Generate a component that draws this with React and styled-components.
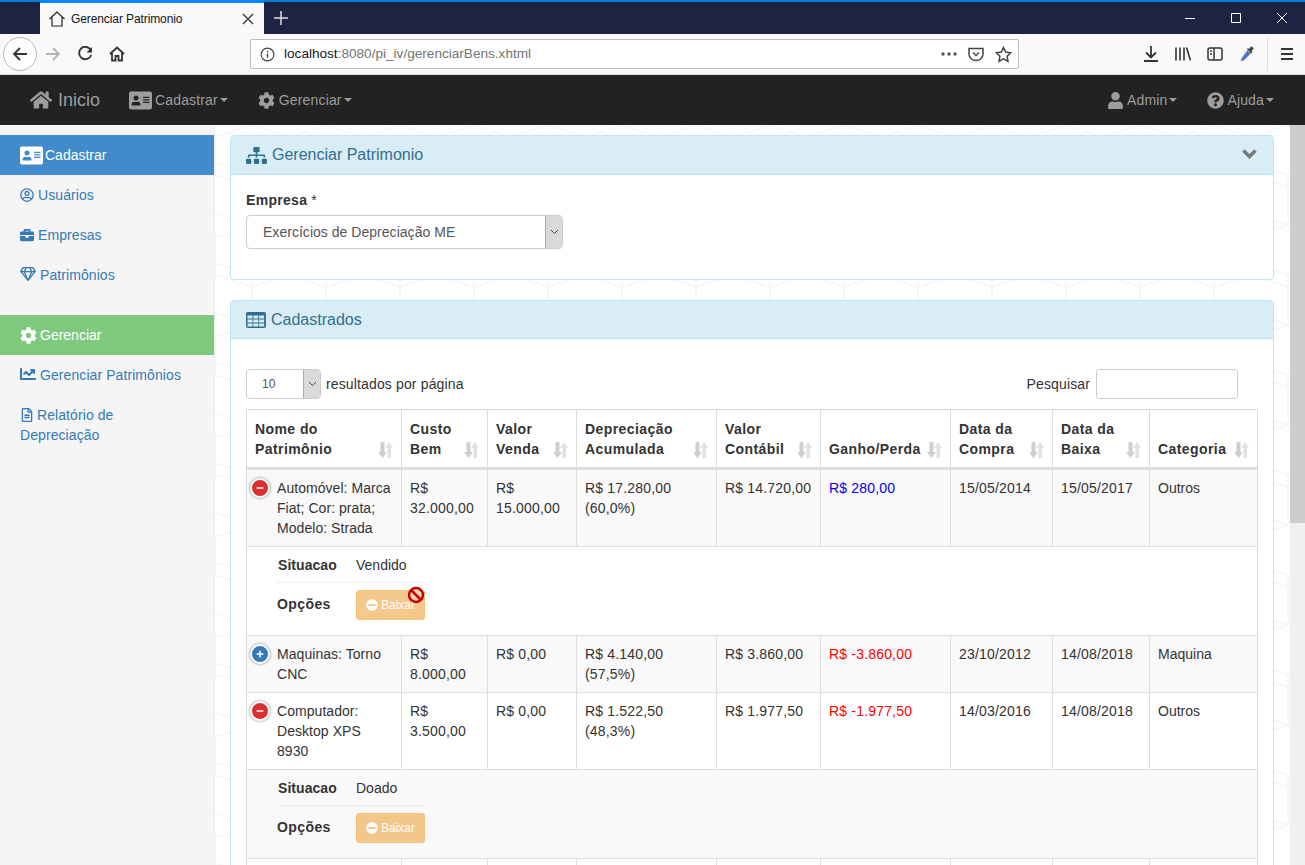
import React from 'react';
import styled, { createGlobalStyle } from 'styled-components';
import {
    FaHome, FaAddressCard, FaCog, FaUser, FaQuestionCircle, FaRegUserCircle, FaBriefcase,
    FaRegGem, FaChartLine, FaRegFileAlt, FaSitemap, FaMinusCircle,
    FaMinus, FaPlus,
} from 'react-icons/fa';

const hexes = encodeURIComponent(
    '<svg xmlns="http://www.w3.org/2000/svg" width="74" height="100"><g fill="none" stroke="#f7f7f7" stroke-width="2"><path d="M0 12L37 0L74 12V38L37 50L0 38Z"/><path d="M37 50V100M0 38V50L37 62M74 38V50L37 62M0 88L37 100L74 88"/></g></svg>',
);

const GlobalStyle = createGlobalStyle`
    html, body {
        margin: 0;
        height: 100%;
        overflow: hidden;
    }
    body {
        font-family: "Liberation Sans", Arial, sans-serif;
        font-size: 14px;
        line-height: 20px;
        color: #333;
    }
    * {
        box-sizing: border-box;
    }
`;

const Page = styled.div`
    height: 865px;
    display: flex;
    flex-direction: column;
    overflow: hidden;
`;

/* browser chrome */
const TabStrip = styled.div`
    height: 34px;
    flex: none;
    display: flex;
    align-items: stretch;
    background: #1f2343;
    border-top: 2px solid #0a7ad8;
    padding-left: 40px;
    color: #fff;
`;

const Tab = styled.div`
    width: 224px;
    display: flex;
    align-items: center;
    padding: 0 10px 0 9px;
    margin-top: -2px;
    background: #f9f9fa;
    border-top: 3px solid #0a84ff;
    color: #15141a;
    font-size: 12px;
    letter-spacing: -0.1px;
`;

const TabTitle = styled.span`
    flex: 1;
    margin-left: 6px;
`;

const NewTab = styled.div`
    width: 34px;
    display: flex;
    align-items: center;
    justify-content: center;
`;

const WindowButtons = styled.div`
    margin-left: auto;
    display: flex;
`;

const WindowButton = styled.div`
    width: 46px;
    display: flex;
    align-items: center;
    justify-content: center;
`;

const Toolbar = styled.div`
    height: 41px;
    flex: none;
    display: flex;
    align-items: center;
    background: #f9f9fa;
    border-bottom: 1px solid #dcdcdc;
    padding-left: 3px;
`;

const BackButton = styled.div`
    width: 34px;
    height: 34px;
    border-radius: 50%;
    border: 1px solid #b8b8b8;
    background: #fff;
    display: flex;
    align-items: center;
    justify-content: center;
`;

const ToolButton = styled.div`
    width: 32px;
    height: 32px;
    display: flex;
    align-items: center;
    justify-content: center;
    flex: none;
`;

const UrlBar = styled.div`
    width: 769px;
    height: 30px;
    margin-left: 117px;
    margin-right: 116px;
    padding-right: 6px;
    display: flex;
    align-items: center;
    background: #fff;
    border: 1px solid #bdbdbd;
    border-radius: 2px;
    font-size: 13.6px;
    color: #737373;
`;

const UrlText = styled.span`
    flex: 1;
    margin-left: 1px;
    b {
        font-weight: normal;
        color: #15141a;
    }
`;

const Separator = styled.div`
    width: 1px;
    height: 34px;
    background: #dedede;
    margin: 0 3px 0 4px;
`;

/* site navbar */
const Navbar = styled.nav`
    height: 50px;
    flex: none;
    display: flex;
    align-items: center;
    background: #222;
    color: #9d9d9d;
    padding-right: 16px;
`;

const Brand = styled.div`
    display: flex;
    align-items: center;
    padding-left: 30px;
    width: 114px;
    font-size: 18px;
    svg {
        font-size: 22px;
        margin-right: 6px;
    }
`;

const NavItem = styled.div`
    display: flex;
    align-items: center;
    padding: 0 15px;
    letter-spacing: 0.15px;
    svg {
        margin-right: ${(p) => p.$gap || 3}px;
        font-size: ${(p) => p.$icon || 18}px;
    }
`;

const Caret = styled.span`
    width: 0;
    height: 0;
    margin-left: 2px;
    border-top: 4px solid #9d9d9d;
    border-left: 4px solid transparent;
    border-right: 4px solid transparent;
`;

const NavRight = styled.div`
    margin-left: auto;
    display: flex;
`;

const Body = styled.div`
    flex: 1;
    min-height: 0;
    display: flex;
    overflow: hidden;
`;

const Scrollbar = styled.div`
    width: 15px;
    flex: none;
    margin-top: -50px;
    background: #f0f0f0;
    display: flex;
    flex-direction: column;
    position: relative;
`;

const ScrollArrow = styled.div`
    height: 17px;
    display: flex;
    align-items: center;
    justify-content: center;
`;

const ScrollThumb = styled.div`
    height: 431px;
    background: #cdcdcd;
`;

const Sidebar = styled.aside`
    width: 215px;
    flex: none;
    padding-top: 10px;
    background: #f5f5f5;
    border-right: 1px solid #eee;
`;

const SideHeader = styled.div`
    height: 40px;
    display: flex;
    align-items: center;
    padding-left: 20px;
    color: #fff;
    background: ${(p) => p.$bg};
    margin-top: ${(p) => p.$top || 0}px;
    svg {
        margin-right: ${(p) => p.$gap}px;
        font-size: ${(p) => p.$icon}px;
    }
`;

const SideLink = styled.div`
    padding: 10px 20px;
    color: #337ab7;
    letter-spacing: 0.08px;
    svg {
        vertical-align: -2px;
        margin-right: ${(p) => p.$gap || 4}px;
        font-size: ${(p) => p.$icon || 14}px;
    }
`;

const Content = styled.main`
    flex: 1;
    min-width: 0;
    padding: 10px 16px 0 15px;
    background-color: #fff;
    background-image: url("data:image/svg+xml,${hexes}");
`;

const Panel = styled.section`
    background: #fff;
    border: 1px solid #bce8f1;
    border-radius: 4px;
    margin-bottom: 20px;
`;

const PanelHeader = styled.div`
    height: ${(p) => p.$height}px;
    display: flex;
    align-items: center;
    padding: 0 15px;
    background: #d9edf7;
    border-bottom: 1px solid #bce8f1;
    border-radius: 3px 3px 0 0;
    color: #31708f;
    font-size: 16px;
`;

const PanelIcon = styled.span`
    display: flex;
    margin-right: 5px;
    font-size: ${(p) => p.$size}px;
`;

const Collapse = styled.svg`
    margin-left: auto;
    margin-right: 1px;
    margin-top: -2px;
`;

const PanelBody = styled.div`
    padding: ${(p) => p.$padding};
    min-height: ${(p) => p.$min || 0}px;
`;

const FieldLabel = styled.div`
    margin-bottom: 5px;
    b {
        letter-spacing: 0.3px;
    }
`;

const SelectBox = styled.div`
    width: ${(p) => p.$width}px;
    height: ${(p) => p.$height}px;
    display: flex;
    align-items: center;
    justify-content: space-between;
    padding-left: ${(p) => p.$pad}px;
    background: #fff;
    border: 1px solid #ccc;
    border-radius: 4px;
    color: #555;
    font-size: ${(p) => p.$font || 14}px;
    letter-spacing: 0.03px;
    overflow: hidden;
`;

const SelectArrow = styled.span`
    width: 17px;
    height: 100%;
    display: flex;
    align-items: center;
    justify-content: center;
    background: #dadada;
    border-left: 1px solid #aaa;
`;

const TableTools = styled.div`
    display: flex;
    align-items: center;
    justify-content: space-between;
    padding-right: 20px;
    margin-bottom: 10px;
`;

const ToolGroup = styled.label`
    display: flex;
    align-items: center;
    gap: 5px;
    letter-spacing: 0.14px;
`;

const SearchInput = styled.div`
    width: 142px;
    height: 30px;
    margin-left: 1px;
    background: #fff;
    border: 1px solid #ccc;
    border-radius: 3px;
`;

const Table = styled.table`
    width: 1011px;
    table-layout: fixed;
    border-collapse: collapse;
    background: #fff;
`;

const Th = styled.th`
    padding: 8px;
    height: 59px;
    text-align: left;
    vertical-align: bottom;
    border: 1px solid #ddd;
    border-bottom-width: 3px;
    letter-spacing: 0.42px;
`;

const ThInner = styled.div`
    display: flex;
    align-items: flex-end;
    justify-content: space-between;
`;

const Tr = styled.tr`
    background: ${(p) => (p.$striped ? '#f9f9f9' : '#fff')};
`;

const Td = styled.td`
    padding: 8px;
    vertical-align: top;
    border: 1px solid #ddd;
    color: ${(p) => p.$color || '#333'};
    letter-spacing: ${(p) => (p.$num ? '0.18px' : '0')};
`;

const FirstTd = styled(Td)`
    padding-left: 3px;
    letter-spacing: 0.05px;
`;

const NameCell = styled.div`
    display: flex;
    gap: 7px;
`;

const Toggler = styled.span`
    width: 20px;
    height: 20px;
    flex: none;
    display: flex;
    align-items: center;
    justify-content: center;
    border-radius: 50%;
    border: 2px solid #fff;
    box-shadow: 0 0 3px #777;
    background: ${(p) => (p.$open ? '#d9302f' : '#337ab7')};
    color: #fff;
    font-size: 8px;
`;

const DetailTd = styled.td`
    padding: 8px 8px 8px 30px;
    border: 1px solid #ddd;
`;

const DetailGrid = styled.div`
    width: 148px;
    display: grid;
    grid-template-columns: 79px 69px;
`;

const DetailLabel = styled.div`
    font-weight: bold;
    letter-spacing: ${(p) => (p.$action ? '0.4px' : '0.05px')};
    padding: ${(p) => (p.$action ? '11px 0 0' : '0 0 7px 1px')};
    border-bottom: ${(p) => (p.$action ? 'none' : '1px solid #eee')};
`;

const DetailValue = styled.div`
    padding: ${(p) => (p.$action ? '7px 0' : '0 0 7px')};
    border-bottom: ${(p) => (p.$action ? 'none' : '1px solid #eee')};
    position: relative;
`;

const BaixarButton = styled.div`
    width: 69px;
    height: 30px;
    display: flex;
    align-items: center;
    justify-content: center;
    gap: 3px;
    font-size: 12px;
    color: #fff;
    background: #f0ad4e;
    border: 1px solid #eea236;
    border-radius: 3px;
    opacity: 0.65;
`;

const BanCursor = styled.svg`
    position: absolute;
    left: 51px;
    top: 3px;
`;

const SortIcon = () => (
    <svg width="15" height="16" viewBox="0 0 15 16" style={{ flex: 'none', marginBottom: 1 }}>
        <path d="M2.500 0h4v10H9l-4.500 6L0 10h2.500z" fill="#cfcfcf" />
        <path d="M9.500 16V6H7l4-6 4 6h-2v10z" fill="#e2e2e2" />
    </svg>
);

const TableIcon = () => (
    <svg width="20" height="16" viewBox="0 0 20 16">
        <rect width="20" height="16" rx="2" fill="#31708f" />
        {[0, 1, 2].map((col) => [0, 1, 2].map((line) => (
            <rect
                key={`${col}-${line}`}
                x={1.5 + col * 5.8}
                y={3.5 + line * 4}
                width="5"
                height="3"
                fill="#d9edf7"
            />
        )))}
    </svg>
);

const columns = [
    { width: 155, label: ['Nome do', 'Patrimônio'] },
    { width: 86, label: ['Custo', 'Bem'] },
    { width: 89, label: ['Valor', 'Venda'] },
    { width: 140, label: ['Depreciação', 'Acumulada'] },
    { width: 104, label: ['Valor', 'Contábil'] },
    { width: 130, label: ['Ganho/Perda'] },
    { width: 102, label: ['Data da', 'Compra'] },
    { width: 97, label: ['Data da', 'Baixa'] },
    { width: 108, label: ['Categoria'] },
];

const rows = [
    {
        name: 'Automóvel: Marca Fiat; Cor: prata; Modelo: Strada',
        custo: 'R$ 32.000,00',
        venda: 'R$ 15.000,00',
        deprec: 'R$ 17.280,00 (60,0%)',
        contabil: 'R$ 14.720,00',
        ganho: 'R$ 280,00',
        ganhoColor: '#0000ff',
        compra: '15/05/2014',
        baixa: '15/05/2017',
        categoria: 'Outros',
        situacao: 'Vendido',
        blocked: true,
    },
    {
        name: 'Maquinas: Torno CNC',
        custo: 'R$ 8.000,00',
        venda: 'R$ 0,00',
        deprec: 'R$ 4.140,00 (57,5%)',
        contabil: 'R$ 3.860,00',
        ganho: 'R$ -3.860,00',
        ganhoColor: '#ff0000',
        compra: '23/10/2012',
        baixa: '14/08/2018',
        categoria: 'Maquina',
    },
    {
        name: 'Computador: Desktop XPS 8930',
        custo: 'R$ 3.500,00',
        venda: 'R$ 0,00',
        deprec: 'R$ 1.522,50 (48,3%)',
        contabil: 'R$ 1.977,50',
        ganho: 'R$ -1.977,50',
        ganhoColor: '#ff0000',
        compra: '14/03/2016',
        baixa: '14/08/2018',
        categoria: 'Outros',
        situacao: 'Doado',
    },
];

function TableBody() {
    let stripe = true;
    const nextStripe = () => {
        const current = stripe;
        stripe = !stripe;
        return current;
    };
    return (
        <tbody>
            {rows.map((row) => (
                <React.Fragment key={row.name}>
                    <Tr $striped={nextStripe()}>
                        <FirstTd>
                            <NameCell>
                                <Toggler $open={!!row.situacao}>
                                    {row.situacao ? <FaMinus /> : <FaPlus />}
                                </Toggler>
                                <span>{row.name}</span>
                            </NameCell>
                        </FirstTd>
                        <Td $num>{row.custo}</Td>
                        <Td $num>{row.venda}</Td>
                        <Td $num>{row.deprec}</Td>
                        <Td $num>{row.contabil}</Td>
                        <Td $num $color={row.ganhoColor}>{row.ganho}</Td>
                        <Td $num>{row.compra}</Td>
                        <Td $num>{row.baixa}</Td>
                        <Td>{row.categoria}</Td>
                    </Tr>
                    {row.situacao && (
                        <Tr $striped={nextStripe()}>
                            <DetailTd colSpan={9}>
                                <DetailGrid>
                                    <DetailLabel>Situacao</DetailLabel>
                                    <DetailValue>{row.situacao}</DetailValue>
                                    <DetailLabel $action>Opções</DetailLabel>
                                    <DetailValue $action>
                                        <BaixarButton>
                                            <FaMinusCircle />
                                            Baixar
                                        </BaixarButton>
                                        {row.blocked && (
                                            <BanCursor width="18" height="18" viewBox="0 0 18 18">
                                                <circle cx="9" cy="9" r="7" fill="#fff" fillOpacity="0.3" stroke="#c00" strokeWidth="2.500" />
                                                <path d="M4 4l10 10" stroke="#c00" strokeWidth="2.500" />
                                            </BanCursor>
                                        )}
                                    </DetailValue>
                                </DetailGrid>
                            </DetailTd>
                        </Tr>
                    )}
                </React.Fragment>
            ))}
            <Tr>
                {columns.map((col) => (
                    <Td key={col.width}>&nbsp;</Td>
                ))}
            </Tr>
        </tbody>
    );
}

function UrlBarContent() {
    return (
        <UrlBar>
            <ToolButton>
                <svg width="15" height="15" viewBox="0 0 16 16" fill="none" stroke="#444" strokeWidth="1.200">
                    <circle cx="8" cy="8" r="6.800" />
                    <path d="M8 7v4.500M8 4v1.600" strokeWidth="1.500" />
                </svg>
            </ToolButton>
            <UrlText><b>localhost</b>:8080/pi_iv/gerenciarBens.xhtml</UrlText>
            <svg width="16" height="4" viewBox="0 0 16 4" fill="#555" style={{ marginRight: 11 }}>
                <circle cx="2" cy="2" r="1.700" /><circle cx="8" cy="2" r="1.700" /><circle cx="14" cy="2" r="1.700" />
            </svg>
            <svg width="16" height="16" viewBox="0 0 16 16" fill="none" stroke="#444" strokeWidth="1.500" style={{ marginRight: 11 }}>
                <path d="M1 2.500h14V8c0 4-3.500 6.500-7 6.500S1 12 1 8z" />
                <path d="M5 6.500l3 3 3-3" />
            </svg>
            <svg width="17" height="17" viewBox="0 0 17 17" fill="none" stroke="#444" strokeWidth="1.500">
                <path d="M8.500 1.500l2.200 4.600 5 .7-3.600 3.500.9 5-4.500-2.400L4 15.300l.9-5L1.300 6.800l5-.7z" />
            </svg>
        </UrlBar>
    );
}

function BrowserChrome() {
    return (
        <>
            <TabStrip>
                <Tab>
                    <svg width="16" height="16" viewBox="0 0 16 16" fill="none" stroke="#222" strokeWidth="1.200">
                        <path d="M.5 8L8 1l7.500 7M3 6.500V15h10V6.500" />
                    </svg>
                    <TabTitle>Gerenciar Patrimonio</TabTitle>
                    <svg width="12" height="12" viewBox="0 0 12 12" stroke="#444" strokeWidth="1.500">
                        <path d="M1 1l10 10M11 1L1 11" />
                    </svg>
                </Tab>
                <NewTab>
                    <svg width="14" height="14" viewBox="0 0 14 14" stroke="#ddd" strokeWidth="1.500">
                        <path d="M7 0v14M0 7h14" />
                    </svg>
                </NewTab>
                <WindowButtons>
                    <WindowButton>
                        <svg width="10" height="10" viewBox="0 0 10 10" stroke="#fff"><path d="M0 5.500h10" /></svg>
                    </WindowButton>
                    <WindowButton>
                        <svg width="10" height="10" viewBox="0 0 10 10" fill="none" stroke="#fff"><path d="M.5.5h9v9h-9z" /></svg>
                    </WindowButton>
                    <WindowButton>
                        <svg width="10" height="10" viewBox="0 0 10 10" stroke="#fff"><path d="M0 0l10 10M10 0L0 10" /></svg>
                    </WindowButton>
                </WindowButtons>
            </TabStrip>
            <Toolbar>
                <BackButton>
                    <svg width="16" height="16" viewBox="0 0 16 16" fill="none" stroke="#333" strokeWidth="1.800">
                        <path d="M15 8H2M8 2L2 8l6 6" />
                    </svg>
                </BackButton>
                <ToolButton>
                    <svg width="16" height="16" viewBox="0 0 16 16" fill="none" stroke="#b5b5b5" strokeWidth="1.800">
                        <path d="M1 8h13M8 2l6 6-6 6" />
                    </svg>
                </ToolButton>
                <ToolButton>
                    <svg width="16" height="16" viewBox="0 0 16 16" fill="none" stroke="#333" strokeWidth="1.900">
                        <path d="M14 4.500A6.200 6.200 0 1 0 14.200 9" />
                        <path d="M15 1v5.500H9.500z" fill="#333" stroke="none" />
                    </svg>
                </ToolButton>
                <ToolButton>
                    <svg width="16" height="16" viewBox="0 0 16 16" fill="none" stroke="#333" strokeWidth="1.800">
                        <path d="M1 8l7-6.500L15 8M3 7v7.500h3.500V10h3v4.500H13V7" />
                    </svg>
                </ToolButton>
                <UrlBarContent />
                <ToolButton>
                    <svg width="16" height="16" viewBox="0 0 16 16" fill="none" stroke="#333" strokeWidth="1.800">
                        <path d="M8 0v11M3 6.500l5 5 5-5M1 15h14" />
                    </svg>
                </ToolButton>
                <ToolButton>
                    <svg width="16" height="16" viewBox="0 0 16 16" fill="none" stroke="#333" strokeWidth="1.600">
                        <path d="M1 1.500v13M5 1.500v13M9 1.500v13M11.500 1.500l4 13" />
                    </svg>
                </ToolButton>
                <ToolButton>
                    <svg width="16" height="16" viewBox="0 0 16 16" fill="none" stroke="#333" strokeWidth="1.500">
                        <rect x="1" y="2" width="14" height="12" rx="2" />
                        <path d="M7 2v12M3 5h2M3 8h2" />
                    </svg>
                </ToolButton>
                <ToolButton>
                    <svg width="16" height="16" viewBox="0 0 16 16">
                        <path d="M8.500 4.500l3 3-6.500 6.500-3 1 1-3z" fill="#4a6fd8" stroke="#8c9ab8" strokeWidth="0.800" />
                        <path d="M8 3l1-1 1 1 2-2.500c1-.5 3 1.500 2.500 2.500L12.500 5l1 1-1.500 1.500z" fill="#444" />
                    </svg>
                </ToolButton>
                <Separator />
                <ToolButton>
                    <svg width="14" height="14" viewBox="0 0 14 14" stroke="#333" strokeWidth="1.800">
                        <path d="M1 2h12M1 7h12M1 12h12" />
                    </svg>
                </ToolButton>
            </Toolbar>
        </>
    );
}

function App() {
    return (
        <Page>
            <GlobalStyle />
            <BrowserChrome />
            <Navbar>
                <Brand><FaHome />Inicio</Brand>
                <NavItem $icon={23}><FaAddressCard />Cadastrar<Caret /></NavItem>
                <NavItem $icon={17} $gap={4}><FaCog />Gerenciar<Caret /></NavItem>
                <NavRight>
                    <NavItem $icon={17}><FaUser />Admin<Caret /></NavItem>
                    <NavItem $icon={17}><FaQuestionCircle />Ajuda<Caret /></NavItem>
                </NavRight>
            </Navbar>
            <Body>
                <Sidebar>
                    <SideHeader $bg="#428bca" $icon={23} $gap={2}><FaAddressCard />Cadastrar</SideHeader>
                    <SideLink><FaRegUserCircle />Usuários</SideLink>
                    <SideLink><FaBriefcase />Empresas</SideLink>
                    <SideLink $icon={16}><FaRegGem />Patrimônios</SideLink>
                    <SideHeader $bg="#7fc97f" $top={20} $icon={17} $gap={3}><FaCog />Gerenciar</SideHeader>
                    <SideLink $icon={16}><FaChartLine />Gerenciar Patrimônios</SideLink>
                    <SideLink $gap={3}><FaRegFileAlt />Relatório de Depreciação</SideLink>
                </Sidebar>
                <Content>
                    <Panel>
                        <PanelHeader $height={39}>
                            <PanelIcon $size={21}><FaSitemap /></PanelIcon>
                            Gerenciar Patrimonio
                            <Collapse width="15" height="10" viewBox="0 0 15 10" fill="none" stroke="#777" strokeWidth="3.500">
                                <path d="M1.500 1.500l6 6 6-6" />
                            </Collapse>
                        </PanelHeader>
                        <PanelBody $padding="15px 15px 0" $min={104}>
                            <FieldLabel><b>Empresa</b> *</FieldLabel>
                            <SelectBox $width={317} $height={34} $pad={16}>
                                Exercícios de Depreciação ME
                                <SelectArrow>
                                    <svg width="9" height="6" viewBox="0 0 9 6" fill="none" stroke="#444"><path d="M1 1l3.500 3.500L8 1" /></svg>
                                </SelectArrow>
                            </SelectBox>
                        </PanelBody>
                    </Panel>
                    <Panel>
                        <PanelHeader $height={38}>
                            <PanelIcon $size={20}><TableIcon /></PanelIcon>
                            Cadastrados
                        </PanelHeader>
                        <PanelBody $padding="30px 15px 0">
                            <TableTools>
                                <ToolGroup>
                                    <SelectBox $width={75} $height={30} $pad={15} $font={12}>
                                        10
                                        <SelectArrow>
                                            <svg width="9" height="6" viewBox="0 0 9 6" fill="none" stroke="#444"><path d="M1 1l3.500 3.500L8 1" /></svg>
                                        </SelectArrow>
                                    </SelectBox>
                                    resultados por página
                                </ToolGroup>
                                <ToolGroup>
                                    Pesquisar
                                    <SearchInput />
                                </ToolGroup>
                            </TableTools>
                            <Table>
                                <colgroup>
                                    {columns.map((col) => (
                                        <col key={col.label.join()} style={{ width: col.width }} />
                                    ))}
                                </colgroup>
                                <thead>
                                    <tr>
                                        {columns.map((col) => (
                                            <Th key={col.label.join()}>
                                                <ThInner>
                                                    <span>
                                                        {col.label.map((line) => (
                                                            <div key={line}>{line}</div>
                                                        ))}
                                                    </span>
                                                    <SortIcon />
                                                </ThInner>
                                            </Th>
                                        ))}
                                    </tr>
                                </thead>
                                <TableBody />
                            </Table>
                        </PanelBody>
                    </Panel>
                </Content>
                <Scrollbar>
                    <ScrollArrow>
                        <svg width="9" height="6" viewBox="0 0 9 6" fill="none" stroke="#505050" strokeWidth="1.600"><path d="M1 5l3.500-3.500L8 5" /></svg>
                    </ScrollArrow>
                    <ScrollThumb />
                </Scrollbar>
            </Body>
        </Page>
    );
}

export default App;
